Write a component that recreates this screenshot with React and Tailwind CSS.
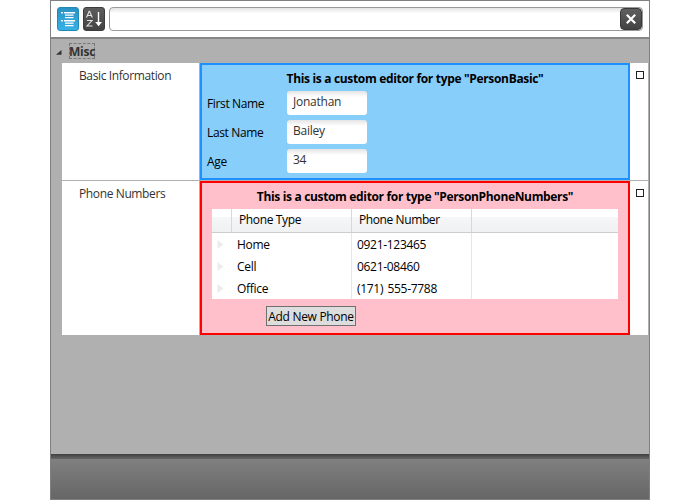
import React from "react";

const people = [
  { label: "First Name", value: "Jonathan" },
  { label: "Last Name", value: "Bailey" },
  { label: "Age", value: "34" },
];

const phones = [
  { type: "Home", number: "0921-123465" },
  { type: "Cell", number: "0621-08460" },
  { type: "Office", number: "(171) 555-7788" },
];

function Toolbar() {
  return (
    <div className="flex h-[38px] shrink-0 items-start border-b-2 border-[#868686] bg-white pl-[6px] pt-[6px]">
      <button className="h-6 w-[22px] rounded-[3px] border border-[#2488b5] bg-linear-to-b from-[#2993c4] to-[#37b1e6]">
        <svg width="20" height="22" viewBox="0 0 20 22" fill="#fff">
          <path d="M3 4h2v1.5H3zM6 4h11v1.5H6zM7 6.500h8.500v1.300H7zM7 9h8.500v1.300H7zM3 12h2v1.500H3zM6 12h11v1.500H6zM7 14.500h8.500v1.300H7zM7 17h8.500v1.300H7z" />
        </svg>
      </button>
      <button className="ml-1 h-6 w-[22px] rounded-[3px] border border-[#3c3c3c] bg-linear-to-b from-[#5d5d5d] to-[#424242]">
        <svg width="20" height="22" viewBox="0 0 20 22" fill="none" stroke="#e4e4e4">
          <path d="M2.500 9.500L5.200 3.300h.4L8.300 9.500M3.500 7.500h4M3 12.500h5L3 18h5.500" strokeWidth="1.100" />
          <path d="M14.500 4v12" stroke="#fff" strokeWidth="1.400" />
          <path d="M11.200 14h6.800L14.600 18.300z" fill="#fff" stroke="none" />
        </svg>
      </button>
      <div className="ml-1 flex h-6 w-[534px] items-center justify-end rounded-[4px] border border-[#9a9a9a] bg-linear-to-b from-[#e4e4e4] via-white via-25% to-white">
        <button className="flex h-[22px] w-[22px] shrink-0 items-center justify-center rounded-[4px] border border-[#393939] bg-linear-to-b from-[#606060] to-[#424242]">
          <svg width="12" height="12" viewBox="0 0 12 12" stroke="#fff" strokeWidth="2.200">
            <path d="M1.800 1.800l8.400 8.400M10.200 1.800l-8.400 8.400" />
          </svg>
        </button>
      </div>
    </div>
  );
}

function PropertyLabel({ children }) {
  return (
    <div className="w-[138px] shrink-0 border-r border-[#b0b0b0] bg-white pl-[17px] pt-[5px] leading-4 tracking-[-0.38px] text-[#333]">
      {children}
    </div>
  );
}

function Marker() {
  return (
    <div className="grow bg-white pl-[6px] pt-2">
      <div className="size-2 border border-[#222]" />
    </div>
  );
}

function PersonEditor() {
  return (
    <div className="h-[117px] w-[430px] border-2 border-[#1e90ff] bg-[#87cefa]">
      <div className="h-[26px] pt-[6px] text-center font-bold leading-4 tracking-[-0.33px]">
        This is a custom editor for type "PersonBasic"
      </div>
      <div className="flex flex-col gap-[5px] pl-[5px]">
        {people.map((p) => (
          <div key={p.label} className="flex h-6 items-center">
            <span className="w-20 pt-[2px] leading-4 tracking-[-0.36px]">{p.label}</span>
            <div className="h-6 w-20 rounded-[3px] bg-linear-to-b from-[#e4e4e4] via-white via-25% to-white pl-[6px] pt-[3px] leading-4 tracking-[-0.24px] text-[#333]">
              {p.value}
            </div>
          </div>
        ))}
      </div>
    </div>
  );
}

function PhoneTable() {
  return (
    <div className="ml-[10px] h-[90px] w-[406px] bg-white">
      <div className="flex h-6 border-b border-[#cdcdd0] bg-linear-to-b from-white from-35% via-[#f5f6f7] via-36% to-[#f0f1f2] leading-4">
        <div className="w-5 border-r border-[#d8d8da]" />
        <div className="w-[120px] border-r border-[#d8d8da] pl-[7px] pt-[3px] tracking-[-0.36px]">Phone Type</div>
        <div className="w-[120px] border-r border-[#d8d8da] pl-[7px] pt-[3px] tracking-[-0.4px]">Phone Number</div>
      </div>
      {phones.map((p) => (
        <div key={p.type} className="flex h-[22px] leading-4">
          <div className="w-5 pl-[5px] pt-[7px]">
            <svg width="7" height="9" viewBox="0 0 7 9">
              <path d="M0.500 0v9L6.500 4.500z" fill="#ececec" />
            </svg>
          </div>
          <div className="w-[120px] border-r border-[#e6e6e8] pl-[5px] pt-1 tracking-[-0.3px]">{p.type}</div>
          <div className="w-[120px] border-r border-[#e6e6e8] pl-[5px] pt-1 tracking-[-0.3px] [word-spacing:1.5px]">{p.number}</div>
        </div>
      ))}
    </div>
  );
}

function PhoneEditor() {
  return (
    <div className="h-[154px] w-[430px] border-2 border-[#ff0000] bg-[#ffc0cb]">
      <div className="h-[26px] pt-[6px] text-center font-bold leading-4 tracking-[-0.34px]">
        This is a custom editor for type "PersonPhoneNumbers"
      </div>
      <PhoneTable />
      <button className="ml-16 mt-[7px] flex h-5 w-[90px] items-center justify-center whitespace-nowrap border border-[#707070] bg-[#dddddd] pt-[2px] leading-4 tracking-[-0.3px]">
        Add New Phone
      </button>
    </div>
  );
}

export default function App() {
  return (
    <div className="h-[500px] w-[700px] overflow-hidden bg-white pl-[50px] font-['Open_Sans','Noto_Sans',sans-serif] text-[12px] text-black">
      <div className="flex h-[500px] w-[600px] flex-col border border-[#808080] bg-[#b0b0b0]">
        <Toolbar />
        <div className="h-[415px] shrink-0 pl-[11px]">
          <div className="-ml-[6px] flex h-6 items-start pt-[4px]">
            <svg className="mt-[7px]" width="6" height="5" viewBox="0 0 6 5">
              <path d="M5.500 0v4.800H0z" fill="#333" />
            </svg>
            <span className="ml-[7px] h-4 w-[26px] whitespace-nowrap border border-dashed border-[#777] indent-[-1px] text-[12px] font-bold leading-[15px] tracking-[-0.2px] text-[#333]">
              Misc
            </span>
          </div>
          <div className="flex h-[117px] w-[586px]">
            <PropertyLabel>Basic Information</PropertyLabel>
            <PersonEditor />
            <Marker />
          </div>
          <div className="mt-px flex h-[154px] w-[586px]">
            <PropertyLabel>Phone Numbers</PropertyLabel>
            <PhoneEditor />
            <Marker />
          </div>
        </div>
        <div className="h-[5px] shrink-0 bg-linear-to-b from-[#404040] to-[#666]" />
        <div className="grow bg-linear-to-b from-[#808080] to-[#666]" />
      </div>
    </div>
  );
}
